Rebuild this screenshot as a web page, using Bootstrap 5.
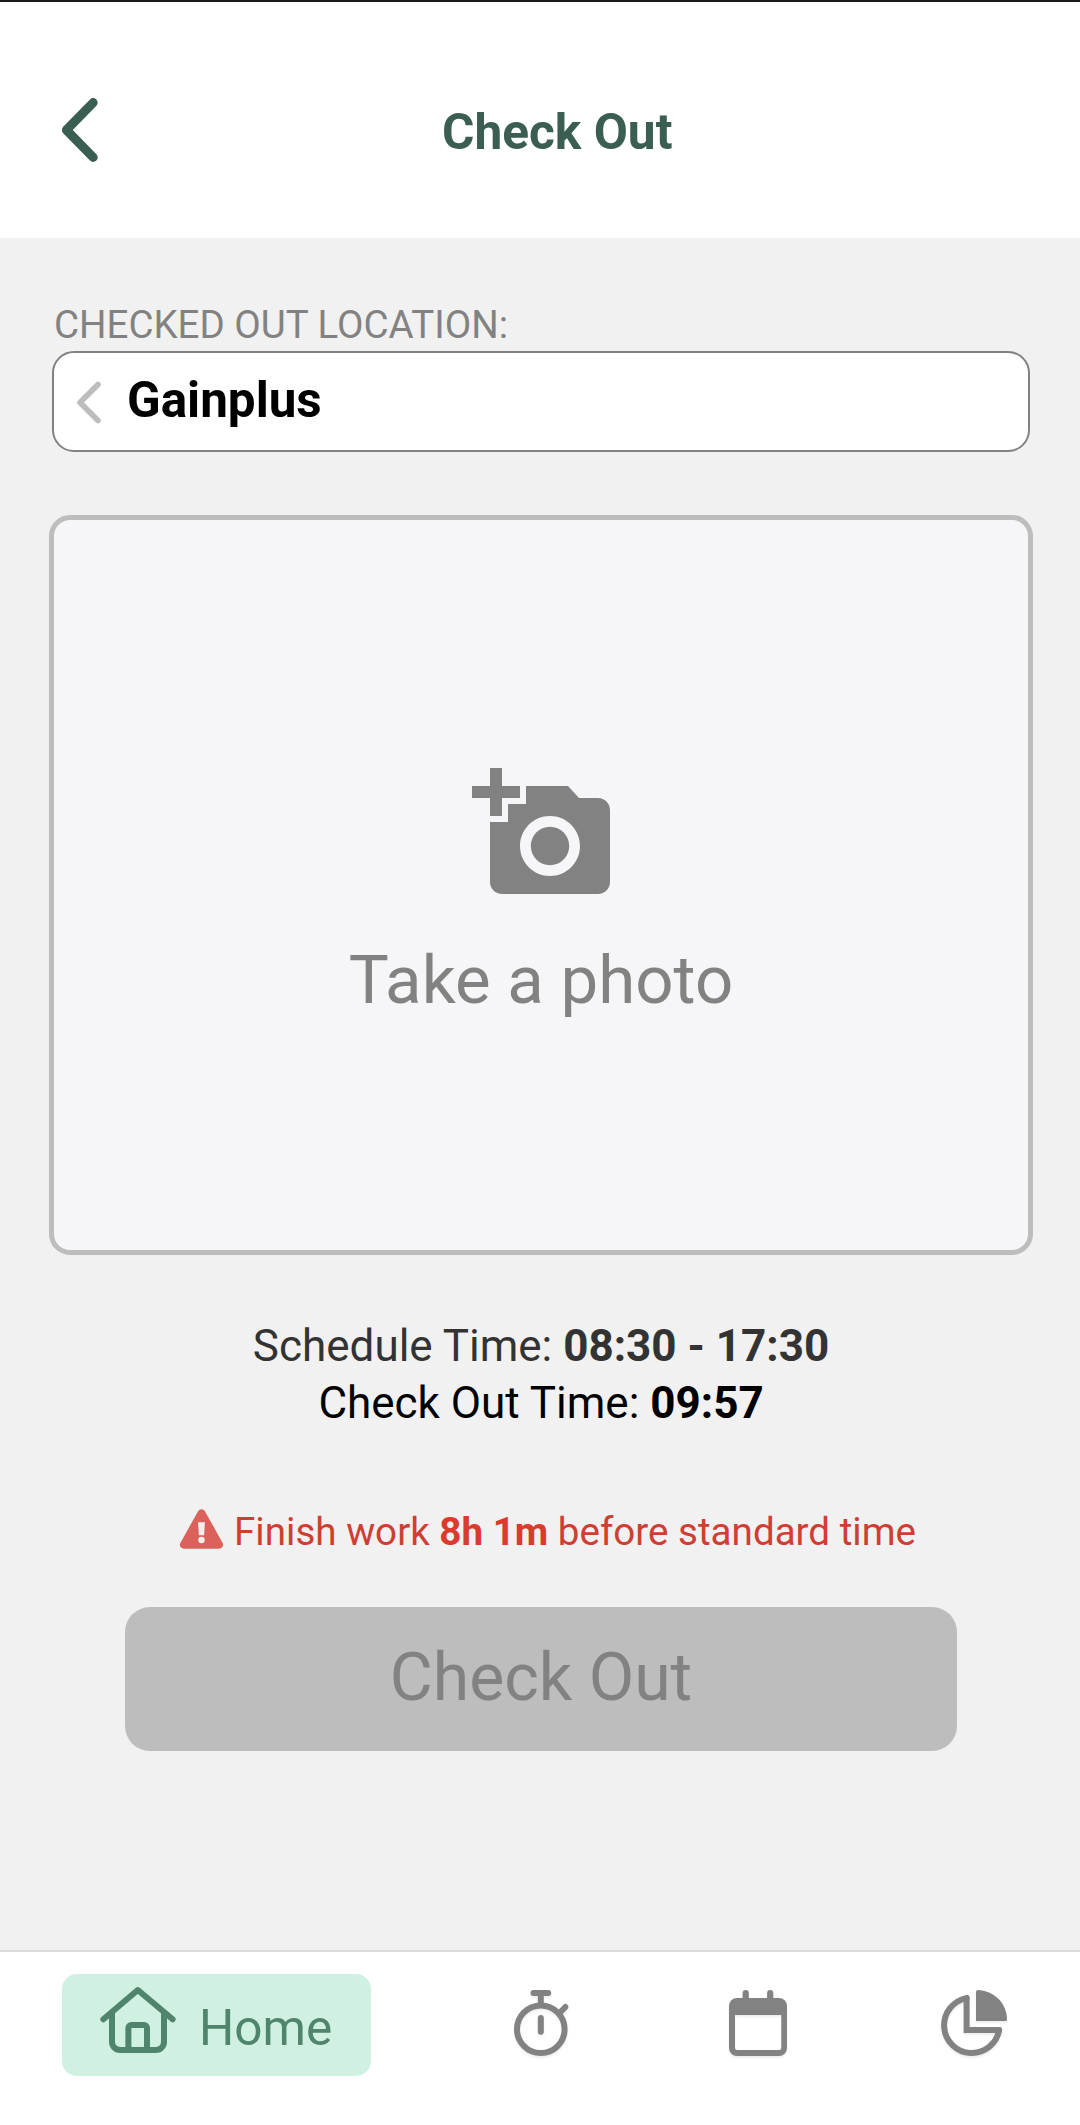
<!DOCTYPE html>
<html lang="en">
<head>
<meta charset="utf-8">
<meta name="viewport" content="width=device-width, initial-scale=1">
<title>Check Out</title>
<link href="https://cdn.jsdelivr.net/npm/bootstrap@5.3.0/dist/css/bootstrap.min.css" rel="stylesheet">
<style>
  body { font-family: Roboto, "Liberation Sans", sans-serif; background: #f1f1f1; color: #000; height: 2125px; overflow: hidden; }
  svg { display: block; flex: none; }
  .app-header { height: 238px; border-top: 2px solid #1a1a1a; padding: 24px 61px 0; }
  .back-btn { width: 38px; margin-top: -5px; }
  .app-title { font-size: 49.6px; line-height: 60px; color: #3a5f52; margin-left: 343px; }
  .app-main { padding: 61px 47px 0 49px; }
  .loc-label { font-size: 38.5px; line-height: 52px; color: #828282; padding-left: 5px; }
  .loc-field { height: 101px; margin: 0 3px 63px 3px; border: 2px solid #828282; border-radius: 22px; padding: 0 0 4px 21px; }
  .loc-field svg { margin-top: 5px; }
  .loc-name { font-size: 49.4px; line-height: 60px; margin-left: 26px; }
  .photo-box { height: 740px; border: 5px solid #bdbdbd; border-radius: 21px; background: #f6f6f8; color: #828282; padding-top: 242px; gap: 34px; }
  .photo-text { font-size: 67.2px; line-height: 80px; }
  .times { font-size: 44px; line-height: 57px; margin-top: 63px; }
  .sched { color: #333; }
  .warn-line { font-size: 38.6px; line-height: 46px; color: #cf3e33; margin-top: 77px; gap: 10px; padding-left: 13px; }
  .warn-line b { color: #dc3a2c; }
  .submit-btn, .submit-btn:disabled { height: 144px; margin: 52px 76px 0; border: 0; border-radius: 25px; background: #bdbdbd; color: #828282; opacity: 1; font-size: 66.1px; line-height: 80px; padding: 0 0 2px; }
  .tab-bar { height: 175px; border-top: 2px solid #dcdcdc; padding-top: 22px; }
  .tab-main { flex: none; width: 433px; }
  .tab-item { flex: none; width: 216.5px; height: 102px; }
  .tab-item svg { margin-bottom: 4px; filter: drop-shadow(0 2px 1px rgba(0,0,0,.07)); }
  .home-pill { width: 309px; height: 102px; border-radius: 15px; background: #d0f0e1; color: #4f846d; font-size: 49.5px; line-height: 60px; padding: 6px 0 0 36px; gap: 21px; }
  .home-pill svg { margin-bottom: 16px; }
</style>
<script src="https://cdn.jsdelivr.net/npm/bootstrap@5.3.0/dist/js/bootstrap.bundle.min.js"></script>
</head>
<body class="d-flex flex-column">
  <header class="app-header bg-white d-flex align-items-center">
    <a href="#" class="back-btn" aria-label="Back">
      <svg width="38" height="66" viewBox="0 0 38 66" fill="none" stroke="#3a5f52" stroke-width="9" stroke-linecap="round" stroke-linejoin="round"><path d="M32.200 5.600 5.400 33l26.800 27.400"/></svg>
    </a>
    <h1 class="app-title fw-bold mb-0">Check Out</h1>
  </header>

  <main class="app-main flex-grow-1 d-flex flex-column">
    <div class="loc-label">CHECKED OUT LOCATION:</div>
    <div class="loc-field bg-white d-flex align-items-center">
      <svg width="26" height="44" viewBox="0 0 26 44" fill="none" stroke="#bdbdbd" stroke-width="5.600" stroke-linecap="round" stroke-linejoin="round"><path d="M23 4.500 5 22.500l18 18"/></svg>
      <span class="loc-name fw-bold">Gainplus</span>
    </div>

    <div class="photo-box d-flex flex-column align-items-center">
      <svg width="144" height="144" viewBox="-.5 0 24 24" fill="currentColor"><path d="M3 4V1h2v3h3v2H5v3H3V6H0V4zM6 10V7h3V4h7l1.830 2H21c1.100 0 2 .9 2 2v12c0 1.100-.9 2-2 2H5c-1.100 0-2-.9-2-2V10zM13 19c2.760 0 5-2.240 5-5s-2.240-5-5-5-5 2.240-5 5 2.240 5 5 5zM9.800 14c0 1.770 1.430 3.200 3.200 3.200s3.200-1.430 3.200-3.200-1.430-3.200-3.200-3.200-3.200 1.430-3.200 3.200z"/></svg>
      <div class="photo-text">Take a photo</div>
    </div>

    <div class="times text-center">
      <div class="sched">Schedule Time: <b>08:30 - 17:30</b></div>
      <div>Check Out Time: <b>09:57</b></div>
    </div>

    <div class="warn-line d-flex justify-content-center align-items-start">
      <svg width="45" height="40" viewBox="0 0 45 41"><path d="M19 2.200a4 4 0 0 1 7 0L44.300 35a4 4 0 0 1-3.500 5.700H4.200A4 4 0 0 1 .7 35z" fill="#da625b"/><path d="M19 13.500h7l-.8 13.500h-5.400z" fill="#f4eeee"/><circle cx="22.500" cy="31.800" r="3.300" fill="#f4eeee"/></svg>
      <span>Finish work <b>8h 1m</b> before standard time</span>
    </div>

    <button type="button" class="btn submit-btn" disabled>Check Out</button>
  </main>

  <nav class="tab-bar bg-white d-flex align-items-start">
    <div class="tab-main d-flex justify-content-center">
      <a href="#" class="home-pill d-flex align-items-center text-decoration-none">
        <svg width="80" height="80" viewBox="0 0 80 80" fill="none" stroke="currentColor" stroke-width="6" stroke-linecap="round" stroke-linejoin="round"><path d="M5.400 39.300 39.800 10l34.800 29.300M14 33v29a8 8 0 0 0 8 8h36a8 8 0 0 0 8-8V33M30.400 70V48a3 3 0 0 1 3-3H46a3 3 0 0 1 3 3v22"/></svg>
        <span>Home</span>
      </a>
    </div>
    <a href="#" class="tab-item d-flex align-items-center justify-content-center" aria-label="Timer">
      <svg width="80" height="80" viewBox="0 0 80 80" fill="none" stroke="#828282" stroke-width="6" stroke-linecap="round"><circle cx="39.800" cy="46.300" r="23.800"/><path d="M32.500 10h14.700M39.800 10v12M39.800 35v13.700M59 29.500l5.300-5.500"/></svg>
    </a>
    <a href="#" class="tab-item d-flex align-items-center justify-content-center" aria-label="Calendar">
      <svg width="80" height="80" viewBox="0 0 80 80" fill="#828282"><path fill-rule="evenodd" d="M19 15h5.600v-5a3.100 3.100 0 0 1 6.200 0v5h18.300v-5a3.100 3.100 0 0 1 6.200 0v5H61a8 8 0 0 1 8 8v42a8 8 0 0 1-8 8H19a8 8 0 0 1-8-8V23a8 8 0 0 1 8-8zM17 32v33a2 2 0 0 0 2 2h42.300a2 2 0 0 0 2-2V32z"/></svg>
    </a>
    <a href="#" class="tab-item d-flex align-items-center justify-content-center" aria-label="Reports">
      <svg width="80" height="80" viewBox="0 0 80 80" fill="none" stroke="#828282" stroke-width="6" stroke-linecap="round"><path d="M32.600 15.100V47h32.500"/><path d="M32.600 15.100A27.700 27.700 0 1 0 65.100 47"/><path d="M42 9a2 2 0 0 1 2-2 29.500 29.500 0 0 1 29 29.500 1.500 1.500 0 0 1-1.500 1.500H42z" fill="#828282" stroke="none"/></svg>
    </a>
  </nav>
</body>
</html>
